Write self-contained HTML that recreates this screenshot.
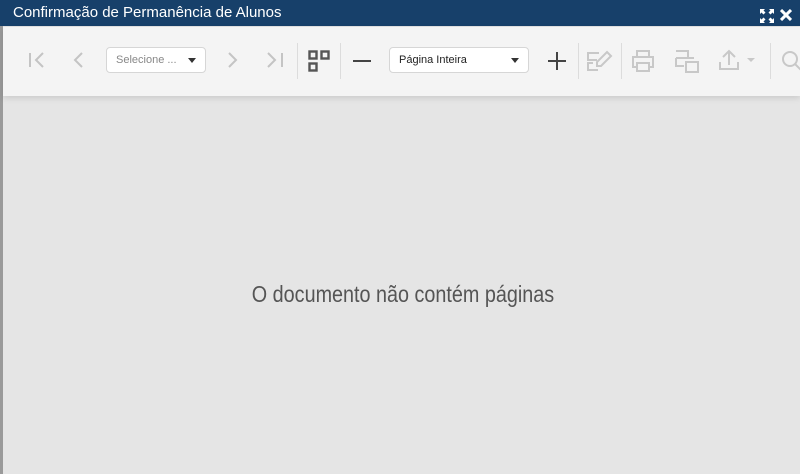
<!DOCTYPE html>
<html><head><meta charset="utf-8"><style>
*{margin:0;padding:0;box-sizing:border-box}
body{width:800px;height:474px;overflow:hidden;background:#e5e5e5;font-family:"Liberation Sans",sans-serif;position:relative}
.title{position:absolute;left:0;top:0;width:800px;height:26px;background:#17406a;color:#fff;font-size:15px;line-height:26px;padding-left:13px}
.lb{position:absolute;left:0;top:26px;width:3px;height:448px;background:#9a9a9a}
.tb{position:absolute;left:3px;top:27px;width:797px;height:69px;background:#f4f4f4;box-shadow:0 2px 6px rgba(0,0,0,.12)}
.sel{position:absolute;background:#fff;border:1px solid #d6d6d6;border-radius:4px;height:26px;font-size:11px;line-height:24px;padding-left:9px}
.sel:after{content:"";position:absolute;right:9px;top:10px;border-left:4px solid transparent;border-right:4px solid transparent;border-top:5px solid #333}
.sep{position:absolute;top:43px;width:1px;height:36px;background:#dcdcdc}
svg{position:absolute}
.msg{position:absolute;left:0;width:806px;top:281px;text-align:center;font-size:23px;color:#555;transform:scaleX(.86)}
</style></head><body>
<div class="title">Confirmação de Permanência de Alunos</div>
<svg style="left:760px;top:9px" width="14" height="14" viewBox="0 0 14 14" fill="#fff"><path d="M0 0h5L3.5 1.5 5.5 3.5 3.5 5.5 1.5 3.5 0 5zM14 0v5l-1.5-1.5-2 2-2-2 2-2L9 0zM0 14V9l1.5 1.5 2-2 2 2-2 2L5 14zM14 14H9l1.5-1.5-2-2 2-2 2 2L14 9z"/></svg>
<svg style="left:780px;top:9px" width="12" height="12" viewBox="0 0 12 12" stroke="#fff" stroke-width="3"><path d="M1 1l10 10M11 1L1 11"/></svg>
<div class="lb"></div>
<div class="tb"></div>
<svg style="left:28px;top:52px" width="18" height="16" stroke="#c4c4c4" stroke-width="2" fill="none"><path d="M2 1v14M15 1L8 8l7 7"/></svg>
<svg style="left:72px;top:52px" width="14" height="16" stroke="#c4c4c4" stroke-width="2" fill="none"><path d="M10 1L3 8l7 7"/></svg>
<div class="sel" style="left:106px;top:47px;width:100px;color:#888">Selecione ...</div>
<svg style="left:226px;top:52px" width="14" height="16" stroke="#c4c4c4" stroke-width="2" fill="none"><path d="M3 1l7 7-7 7"/></svg>
<svg style="left:266px;top:52px" width="18" height="16" stroke="#c4c4c4" stroke-width="2" fill="none"><path d="M2 1l7 7-7 7M16 1v14"/></svg>
<div class="sep" style="left:297px"></div>
<svg style="left:308px;top:50px" width="22" height="22" stroke="#555" stroke-width="2.4" fill="none"><rect x="1.5" y="1.5" width="7" height="7"/><rect x="13.5" y="1.5" width="7" height="7"/><rect x="1.5" y="13.5" width="7" height="7"/></svg>
<div class="sep" style="left:340px"></div>
<svg style="left:353px;top:59px" width="18" height="4"><rect y="1" width="18" height="2" fill="#444"/></svg>
<div class="sel" style="left:389px;top:47px;width:140px;color:#222">Página Inteira</div>
<svg style="left:548px;top:52px" width="18" height="18" fill="#444"><rect y="8" width="18" height="2"/><rect x="8" width="2" height="18"/></svg>
<div class="sep" style="left:578px"></div>
<svg style="left:587px;top:49px" width="26" height="24" stroke="#c8c8c8" stroke-width="2" fill="none"><path d="M12 4H1v7h9M6 14H1v7h10M20 3l4 4-10 10h-4v-4z"/></svg>
<div class="sep" style="left:621px"></div>
<svg style="left:632px;top:50px" width="22" height="22" stroke="#c8c8c8" stroke-width="2" fill="none"><path d="M5 7V1h12v6M5 17H1V7h20v10h-4M5 13h12v8H5z"/></svg>
<svg style="left:675px;top:50px" width="24" height="24" stroke="#c8c8c8" stroke-width="2" fill="none"><path d="M1 1h12v7M1 8h18M1 8v8h8M11 12h12v10H11z"/></svg>
<svg style="left:718px;top:49px" width="38" height="22" stroke="#c8c8c8" stroke-width="2" fill="none"><path d="M11 16V2M5 8l6-6 6 6M2 13v7h18v-7"/><path d="M29 9h8l-4 4z" fill="#c8c8c8" stroke="none"/></svg>
<div class="sep" style="left:770px"></div>
<svg style="left:781px;top:50px" width="19" height="22" stroke="#c8c8c8" stroke-width="2" fill="none"><circle cx="9" cy="9" r="7"/><path d="M14 14l6 6"/></svg>
<div class="msg">O documento não contém páginas</div>
</body></html>
